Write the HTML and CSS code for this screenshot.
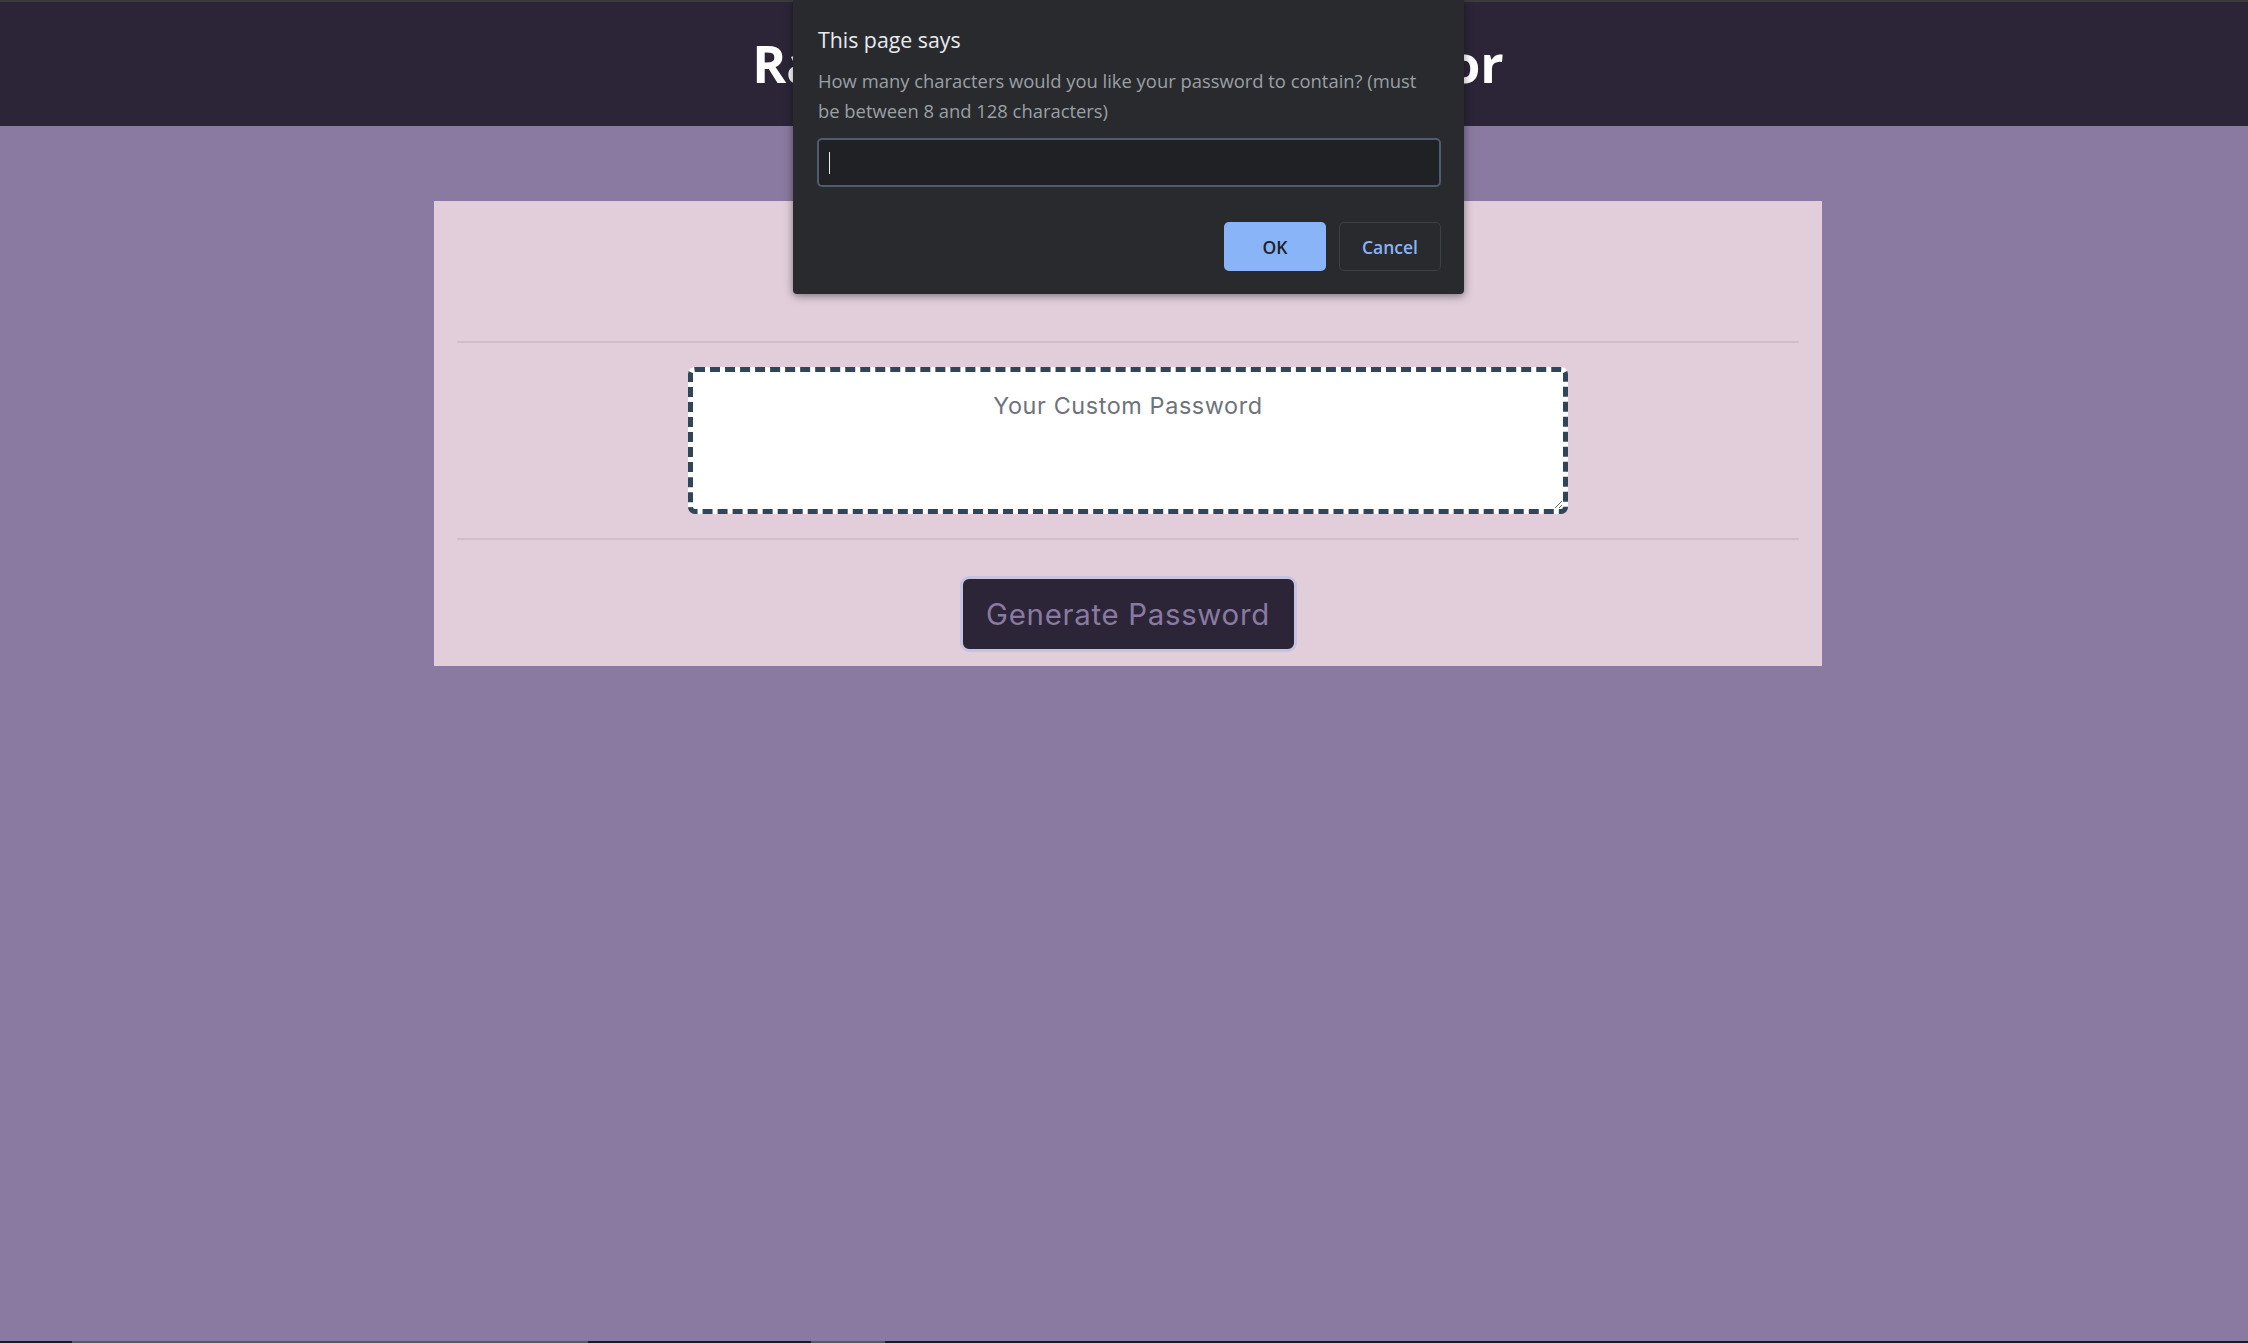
FILE: index.html
```html
<!DOCTYPE html>
<html lang="en">
<head>
<meta charset="utf-8">
<title>Random Password Generator</title>
<link rel="stylesheet" href="styles.css">
</head>
<body>
<header class="site-header">
  <h1 class="site-title">Random Password Generator</h1>
</header>
<main class="wrapper">
  <section class="card">
    <div class="card-header"></div>
    <div class="card-body">
      <textarea class="password" readonly placeholder="Your Custom Password"></textarea>
    </div>
    <div class="card-footer">
      <button class="btn" type="button">Generate Password</button>
    </div>
  </section>
</main>

<div class="dialog">
  <div class="dialog-title">This page says</div>
  <div class="dialog-msg">How many characters would you like your password to contain? (must be between 8 and 128 characters)</div>
  <div class="dialog-input"><span class="caret"></span></div>
  <div class="dialog-actions">
    <button class="dbtn dbtn-ok" type="button">OK</button>
    <button class="dbtn dbtn-cancel" type="button">Cancel</button>
  </div>
</div>

<div class="taskstrip">
  <span class="ts-black ts-a"></span>
  <span class="ts-gray ts-b"></span>
  <span class="ts-black ts-c"></span>
  <span class="ts-gray ts-d"></span>
  <span class="ts-black ts-e"></span>
</div>
</body>
</html>
```

FILE: styles.css
```css
* { box-sizing: border-box; }
html, body { height: 100%; }
body {
  margin: 0;
  background: #8a7aa1;
  font-family: "Open Sans", "Noto Sans", sans-serif;
  min-height: 1343px;
  position: relative;
}
.site-header {
  height: 126px;
  background: #2c2538;
  border-top: 2px solid #3b3a3f;
  display: flex;
  align-items: center;
  justify-content: center;
  padding-left: 8px;
}
.site-title {
  margin: 0;
  color: #ffffff;
  font-family: "Open Sans", "Noto Sans", sans-serif;
  font-weight: 700;
  font-size: 51.5px;
  line-height: 1;
}
.wrapper {
  padding: 75px 426px 0 434px;
}
.card {
  background: #e2cedb;
  height: 465px;
  display: flex;
  flex-direction: column;
}
.card-header {
  height: 142px;
  margin: 0 23px;
  border-bottom: 2px solid #d2bdcb;
}
.card-body {
  padding: 24px 0 24px;
  display: flex;
  justify-content: center;
  margin: 0 23px;
  border-bottom: 2px solid #d2bdcb;
}
.password {
  display: block;
  width: 880px;
  height: 147px;
  border: 5px dashed #2f4658;
  border-radius: 7px;
  background: #ffffff;
  resize: vertical;
  text-align: center;
  font-family: "Inter", "Liberation Sans", sans-serif;
  font-size: 23.4px;
  letter-spacing: 0.6px;
  padding: 19px 15px;
  outline: none;
  color: #495057;
}
.password::placeholder { color: #6e737b; opacity: 1; }
.card-footer {
  display: flex;
  justify-content: center;
  padding-top: 36px;
}
.btn {
  width: 337px;
  height: 76px;
  background: #2c2538;
  color: #8a7aa1;
  border: 3px solid #c7c2df;
  border-radius: 9px;
  font-family: "Inter", "Liberation Sans", sans-serif;
  font-size: 29.4px;
  letter-spacing: 0.7px;
  padding: 0;
}

/* Browser prompt overlay */
.dialog {
  position: absolute;
  left: 793px;
  top: 0;
  width: 671px;
  height: 294px;
  background: #292a2d;
  box-shadow: 0 2px 8px rgba(0, 0, 0, 0.45);
  border-radius: 0 0 4px 4px;
  padding: 25px 23px 0 24px;
  font-family: "Open Sans", "Noto Sans", sans-serif;
}
.dialog-title {
  color: #e8eaed;
  font-size: 21.3px;
  line-height: 30px;
  margin-left: 1px;
}
.dialog-msg {
  color: #9aa0a6;
  font-size: 18.4px;
  line-height: 30px;
  margin: 11px 0 0 1px;
}
.dialog-input {
  margin-top: 12px;
  height: 49px;
  background: #202124;
  border: 2px solid #4f5b70;
  border-radius: 5px;
  display: flex;
  align-items: center;
  padding-left: 10px;
}
.caret {
  display: block;
  width: 1px;
  height: 22px;
  background: #e8eaed;
}
.dialog-actions {
  display: flex;
  justify-content: flex-end;
  gap: 13px;
  margin-top: 35px;
}
.dbtn {
  height: 49px;
  width: 102px;
  border-radius: 5px;
  font-family: "Open Sans", "Noto Sans", sans-serif;
  font-size: 17.5px;
  font-weight: 600;
  padding: 0;
}
.dbtn-ok {
  background: #8ab4f8;
  color: #202124;
  border: none;
}
.dbtn-cancel {
  background: transparent;
  color: #8ab4f8;
  border: 1px solid #3c4043;
}

/* bottom screen edge strip */
.taskstrip {
  position: absolute;
  left: 0;
  right: 0;
  bottom: 0;
  height: 2px;
  display: flex;
}
.taskstrip span { display: block; height: 2px; }
.ts-black { background: #1b1b1b; }
.ts-gray { background: #5a5a5a; }
.ts-a { width: 72px; }
.ts-b { width: 516px; }
.ts-c { width: 223px; }
.ts-d { width: 74px; }
.ts-e { flex: 1; }
```
